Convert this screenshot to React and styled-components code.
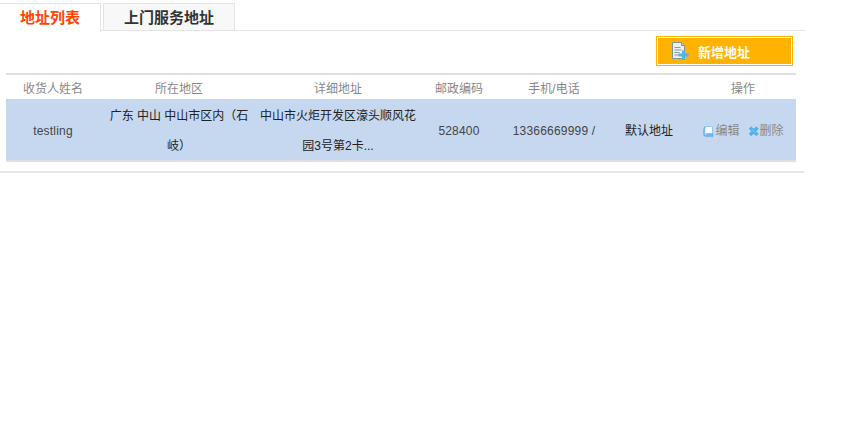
import React from 'react'
import styled, { createGlobalStyle } from 'styled-components'

const GlobalStyle = createGlobalStyle`
  html, body {
    margin: 0;
    padding: 0;
    background: #fff;
    font-family: "Liberation Sans", "Noto Sans CJK SC", sans-serif;
    font-size: 12px;
    color: #333;
  }
`

const Page = styled.div`
  width: 804px;
  padding-top: 3px;
`

const TabBar = styled.div`
  display: flex;
  gap: 2px;
  height: 27px;
  width: 805px;
  border-bottom: 1px solid #e3e3e3;
`

const Tab = styled.div`
  box-sizing: border-box;
  height: ${p => (p.$active ? '29px' : '28px')};
  width: ${p => p.$width}px;
  padding-bottom: ${p => (p.$active ? '3px' : '2px')};
  display: flex;
  align-items: center;
  justify-content: center;
  font-size: 15px;
  font-weight: 700;
  color: ${p => (p.$active ? '#ff4400' : '#333')};
  background: ${p => (p.$active ? '#fff' : '#f8f8f8')};
  border: 1px solid #e3e3e3;
  border-left: ${p => (p.$active ? '0' : '1px solid #e3e3e3')};
  border-bottom: ${p => (p.$active ? '0' : '1px solid #e3e3e3')};
`

const Toolbar = styled.div`
  display: flex;
  justify-content: flex-end;
  width: 793px;
  padding-top: 5px;
  height: 37px;
`

const AddButton = styled.div`
  box-sizing: border-box;
  width: 137px;
  height: 30px;
  display: flex;
  align-items: center;
  padding-left: 14px;
  gap: 9px;
  background: #ffb200;
  border: 1px solid #ffb200;
  outline: 1px solid #fff;
  outline-offset: -2px;
  color: #fff;
  font-size: 13px;
  font-weight: 700;
`

const Table = styled.table`
  margin-left: 6px;
  width: 790px;
  table-layout: fixed;
  border-collapse: separate;
  border-spacing: 0;
  border-top: 2px solid #e0e0e0;
  border-bottom: 2px solid #e0e0e0;
`

const HeadCell = styled.th`
  height: 24px;
  padding: 0;
  font-weight: 400;
  font-size: 12px;
  color: #888;
  text-align: center;
`

const Row = styled.tr`
  background: #c6d8f0;
`

const Cell = styled.td`
  padding: 2px 0 0;
  height: 59px;
  line-height: 30px;
  text-align: center;
  color: ${p => p.$color || '#333'};
  letter-spacing: ${p => (p.$latin ? '0.2px' : '0')};
`

const Wrapped = styled.div`
  width: ${p => p.$width}px;
  margin: 0 auto -1px;
`

const Actions = styled.div`
  display: flex;
  justify-content: center;
  gap: 8px;
  padding-left: 1px;
`

const ActionLink = styled.span`
  display: inline-flex;
  align-items: center;
  color: #888;
`

const FootLine = styled.div`
  margin-top: 9px;
  height: 2px;
  background: #e6e6e6;
`

const columns = [
  ['收货人姓名', 94],
  ['所在地区', 158],
  ['详细地址', 160],
  ['邮政编码', 82],
  ['手机/电话', 108],
  ['', 82],
  ['操作', 106]
]

const AddIcon = () => (
  <svg width="18" height="20" viewBox="0 0 18 20">
    <path d="M1.5 1.5h9l3 3v13h-12z" fill="#eef0ec" stroke="#7f9393" />
    <path d="M10.5 1.5v3h3" fill="#c9d3d0" stroke="#7f9393" />
    <path d="M3.5 6.5h6M3.5 9h7M3.5 11.5h5M3.5 14h5" stroke="#8a9a9a" />
    <path d="M11 9.5h3v3h3.500v3H14v3.500h-3V15.500H7.500v-3H11z" fill="#4fb4ee" />
  </svg>
)

const EditIcon = () => (
  <svg width="12" height="12" viewBox="0 0 12 12">
    <path d="M2.500 1h7.500v8H2.500z" fill="#f6f9fd" />
    <path d="M3 1.500h6.500M9.500 1.500v7" stroke="#9cc4ea" fill="none" />
    <path d="M2.500 1.500C1 2.500 1 3.500 1 4.500v5c0 .8.500 1.500 1.500 1.500h7V9H3" fill="none" stroke="#5fa9ea" strokeWidth="1.300" />
  </svg>
)

const DeleteIcon = () => (
  <svg width="12" height="12" viewBox="0 0 12 12">
    <path d="M2 2.500l7.500 7.500M9.500 2.500L2 10" stroke="#4fb0ea" strokeWidth="3.500" />
    <path d="M4 4.500l3.500 3.500" stroke="#8fd0f5" strokeWidth="1" />
  </svg>
)

export default function App () {
  return (
    <Page>
      <GlobalStyle />
      <TabBar>
        <Tab $active $width={101}>地址列表</Tab>
        <Tab $width={132}>上门服务地址</Tab>
      </TabBar>
      <Toolbar>
        <AddButton>
          <AddIcon />
          新增地址
        </AddButton>
      </Toolbar>
      <Table>
        <colgroup>
          {columns.map(([title, width], i) => <col key={i} width={width} />)}
        </colgroup>
        <thead>
          <tr>
            {columns.map(([title], i) => <HeadCell key={i}>{title}</HeadCell>)}
          </tr>
        </thead>
        <tbody>
          <Row>
            <Cell $latin $color="#444">testling</Cell>
            <Cell $color="#222"><Wrapped $width={140}>广东 中山 中山市区内（石岐）</Wrapped></Cell>
            <Cell $color="#222"><Wrapped $width={158}>中山市火炬开发区濠头顺风花园3号第2卡...</Wrapped></Cell>
            <Cell $latin $color="#444">528400</Cell>
            <Cell $latin $color="#444">13366669999 /</Cell>
            <Cell $color="#222">默认地址</Cell>
            <Cell>
              <Actions>
                <ActionLink><EditIcon />编辑</ActionLink>
                <ActionLink><DeleteIcon />删除</ActionLink>
              </Actions>
            </Cell>
          </Row>
        </tbody>
      </Table>
      <FootLine />
    </Page>
  )
}
